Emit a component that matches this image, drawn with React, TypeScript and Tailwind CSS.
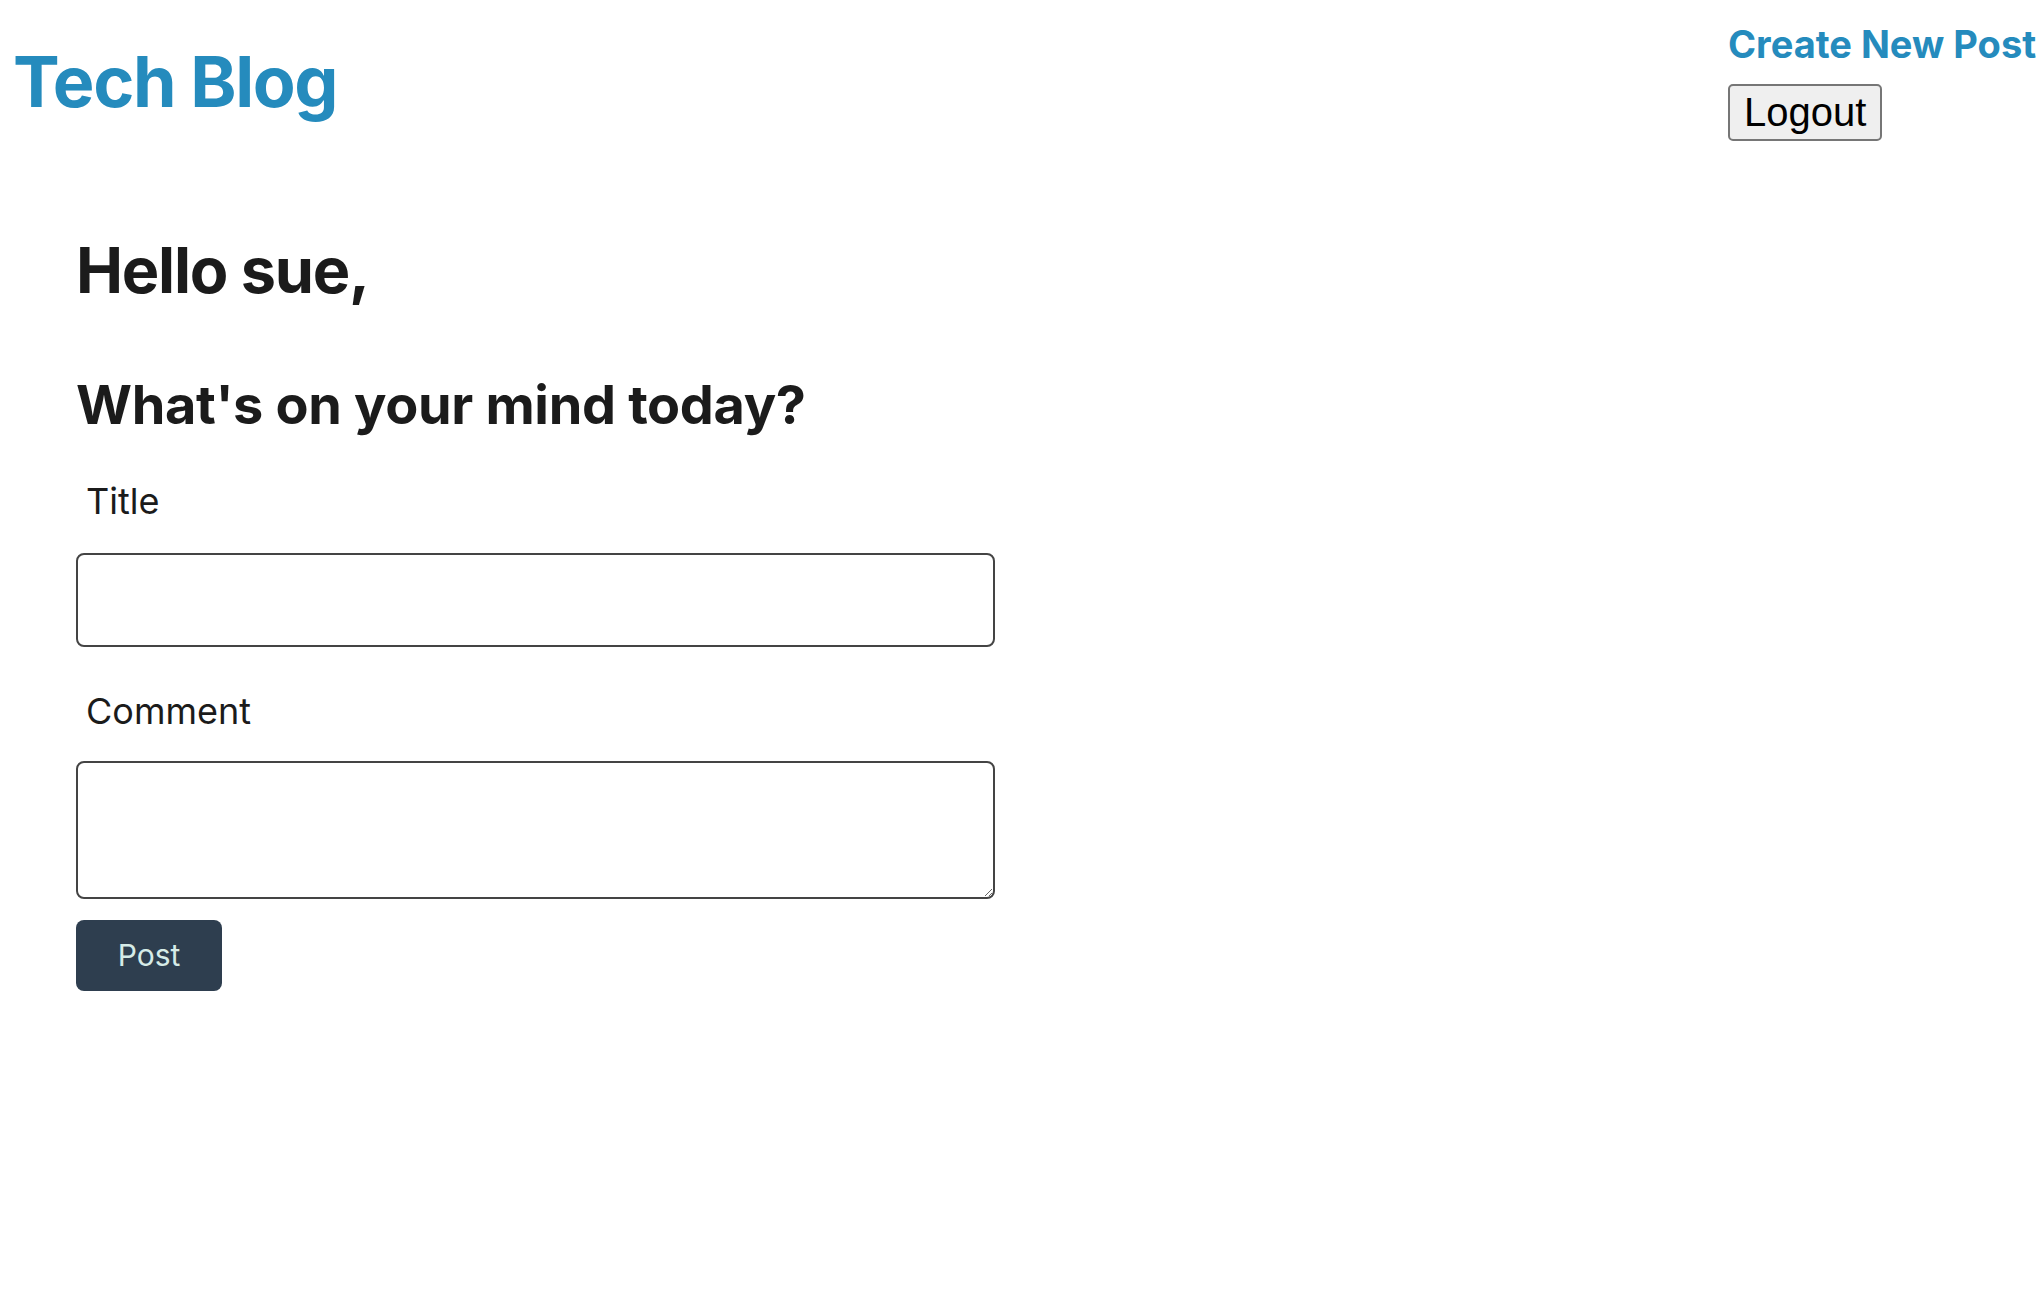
export default function App() {
  return (
    <div className="min-h-screen overflow-hidden bg-white font-['Inter',sans-serif] text-[#1b1b1b]">
      {/* Header */}
      <header className="flex justify-between">
        <h1 className="ml-[13px] mt-[47px] text-[70px] font-bold leading-none tracking-[-0.02em] text-[#258bbd]">
          Tech Blog
        </h1>
        <nav className="flex w-[310px] shrink-0 flex-col items-start pt-[25px]">
          <a href="#" className="whitespace-nowrap text-[38px] font-bold leading-none text-[#258bbd]">
            Create New Post
          </a>
          <button className="mt-[21px] rounded-[5px] border-2 border-[#767676] bg-[#efefef] px-[14px] py-1 font-['Liberation_Sans',Arial,sans-serif] text-[40px] leading-[45px] text-black">
            Logout
          </button>
        </nav>
      </header>

      {/* Main */}
      <main className="ml-[76px] flex flex-col items-start">
        <h2 className="mt-[98px] text-[63px] font-bold leading-none tracking-[-0.02em]">Hello sue,</h2>
        <h3 className="mt-[76px] text-[54px] font-bold leading-none tracking-[-0.006em]">
          What's on your mind today?
        </h3>

        <form className="flex flex-col items-start" onSubmit={(e) => e.preventDefault()}>
          <label className="ml-[10px] mt-[51px] text-[36px] leading-none">Title</label>
          <input
            type="text"
            className="mt-[34px] h-[94px] w-[919px] rounded-[8px] border-2 border-[#444] bg-white px-3 text-[30px] outline-none"
          />

          <label className="ml-[10px] mt-[46px] text-[36px] leading-none">Comment</label>
          <textarea className="mt-[32px] h-[138px] w-[919px] rounded-[8px] border-2 border-[#444] bg-white px-3 py-2 text-[30px] outline-none" />

          <button
            type="submit"
            className="mt-[21px] h-[71px] w-[146px] rounded-[8px] bg-[#2e3e4f] text-[30px] text-[#d6ebe7]"
          >
            Post
          </button>
        </form>
      </main>
    </div>
  )
}
